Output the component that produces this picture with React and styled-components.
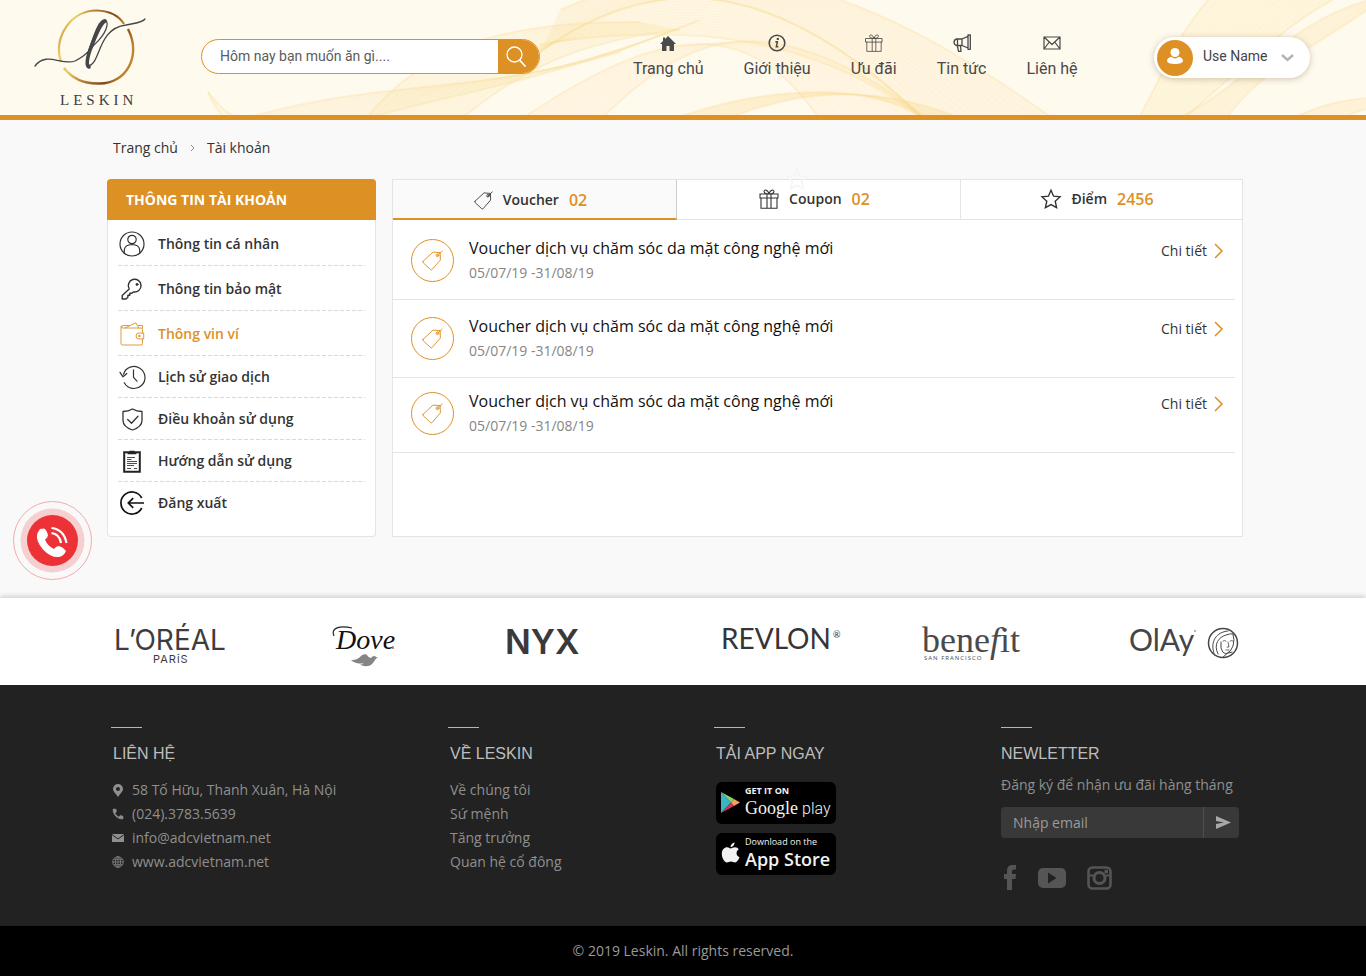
import React from "react";
import styled, { createGlobalStyle, css } from "styled-components";

const c = {
  orange: "#dd9024",
  cream: "#fffaee",
  page: "#f9f9f9",
  line: "#e4e4e4",
  ink: "#333333",
  foot: "#222222",
  footText: "#8f8f8f",
};
const openSans = '"Open Sans", "Noto Sans", sans-serif';
const roboto = 'Roboto, "Noto Sans", sans-serif';
const arial = '"Liberation Sans", Arial, sans-serif';

const Global = createGlobalStyle`
  *, *::before, *::after { box-sizing: border-box; }
  body { margin: 0; background: ${c.page}; font-family: ${openSans}; font-size: 14px; line-height: 20px; color: ${c.ink}; }
  a { color: inherit; text-decoration: none; }
  ul { margin: 0; padding: 0; list-style: none; }
  h2, h3, p { margin: 0; }
  button { font: inherit; cursor: pointer; }
  svg { display: block; flex: none; overflow: visible; }
`;

/* ---------- header ---------- */

const Header = styled.header`
  position: relative;
  display: flex;
  align-items: flex-start;
  height: 120px;
  padding: 0 56px 0 34px;
  background: ${c.cream};
  border-bottom: 5px solid ${c.orange};
`;
const Waves = styled.svg`
  position: absolute;
  inset: 0;
  width: 100%;
  height: 100%;
  overflow: hidden;
`;
const Logo = styled.a`
  position: relative;
  width: 113px;
  margin-top: 8px;
`;
const Search = styled.form`
  position: relative;
  display: flex;
  flex: 0 1 339px;
  height: 35px;
  margin: 39px 0 0 54px;
  border: 1px solid ${c.orange};
  border-radius: 18px;
  background: #fff;
  overflow: hidden;
`;
const SearchInput = styled.input`
  flex: 1;
  min-width: 0;
  padding: 0 18px 2px;
  border: 0;
  outline: 0;
  background: transparent;
  font: 14px/20px ${roboto};
  color: #555;
  &::placeholder { color: #5c5c5c; opacity: 1; }
`;
const SearchButton = styled.button`
  display: flex;
  align-items: center;
  width: 41px;
  padding: 0 0 0 8px;
  border: 0;
  background: ${c.orange};
`;
const Nav = styled.nav`
  position: relative;
  display: flex;
  gap: 40px;
  margin: 33px 0 0 93px;
`;
const NavItem = styled.a`
  display: flex;
  flex-direction: column;
  align-items: center;
  gap: 6px;
  font: 16px/20px ${roboto};
  color: #484848;
  white-space: nowrap;
`;
const NavIcon = styled.span`
  display: flex;
  align-items: center;
  height: 20px;
`;
const UserMenu = styled.button`
  position: relative;
  display: flex;
  align-items: center;
  gap: 10px;
  width: 156px;
  height: 41px;
  margin: 37px 0 0 auto;
  padding: 0 16px 0 3px;
  border: 0;
  border-radius: 21px;
  background: #fff;
  box-shadow: 0 1px 6px rgba(90, 70, 30, 0.3);
  font: 14px/20px ${roboto};
  color: #444;
  white-space: nowrap;
`;
const Avatar = styled.span`
  display: grid;
  place-items: center;
  width: 36px;
  height: 36px;
  padding-bottom: 3px;
  border-radius: 50%;
  background: ${c.orange};
`;
const UserName = styled.span`
  flex: 1;
  padding-bottom: 3px;
  text-align: left;
`;

/* ---------- page body ---------- */

const Crumbs = styled.nav`
  display: flex;
  align-items: center;
  gap: 12px;
  padding: 18px 123px 0 113px;
`;
const Columns = styled.main`
  display: flex;
  gap: 16px;
  padding: 21px 123px 61px 107px;
`;
const Side = styled.aside`
  flex: 0 0 269px;
  padding-bottom: 12px;
  border: 1px solid ${c.line};
  border-top: 0;
  border-radius: 4px;
  background: #fff;
`;
const SideTitle = styled.h2`
  margin: 0 -1px;
  padding: 0 19px;
  border-radius: 4px 4px 0 0;
  background: ${c.orange};
  color: #fff;
  font-size: 14px;
  font-weight: 700;
  line-height: 41px;
`;
const SideList = styled.ul`
  padding: 1px 10px 0;
`;
const SideItem = styled.li`
  height: ${(p) => (p.$tall ? 45 : 42)}px;
  background: repeating-linear-gradient(90deg, #d9d9d9 0 4px, transparent 4px 6px) bottom / 100% 1px no-repeat;
  &:last-child { background: none; }
`;
const SideLink = styled.a`
  display: flex;
  align-items: center;
  gap: 12px;
  height: 100%;
  font-weight: 600;
  color: ${(p) => (p.$active ? c.orange : c.ink)};
`;
const SideIcon = styled.span`
  display: flex;
  justify-content: center;
  width: 28px;
`;
const Panel = styled.section`
  flex: 1;
  min-width: 0;
  border: 1px solid ${c.line};
  background: #fff;
`;
const Tabs = styled.div`
  position: relative;
  display: grid;
  grid-template-columns: 284fr 284fr 281fr;
`;
const Tab = styled.button`
  display: flex;
  align-items: center;
  justify-content: center;
  gap: 10px;
  height: 40px;
  padding: 0 8px 2px 0;
  border: 0;
  border-right: 1px solid ${c.line};
  border-bottom: 1px solid ${c.line};
  background: #fff;
  font-weight: 600;
  color: ${c.ink};
  &:last-of-type { border-right: 0; }
  ${(p) =>
    p.$active &&
    css`
      padding-top: 2px;
      padding-bottom: 0;
      border-right-color: #cccccc;
      border-bottom: 2px solid ${c.orange};
      background: #fafafa;
    `}
`;
const Count = styled.span`
  font-size: 16px;
  color: ${c.orange};
`;
const FaintStar = styled.span`
  position: absolute;
  left: 393px;
  top: -12px;
  color: #f5f5f5;
`;
const VoucherList = styled.ul`
  padding: 2px 7px 0 0;
`;
const Voucher = styled.li`
  display: flex;
  align-items: center;
  padding: ${(p) => (p.$compact ? 12 : 15)}px 12px 15px 18px;
  border-bottom: 1px solid ${c.line};
`;
const Badge = styled.span`
  display: grid;
  place-items: center;
  width: 43px;
  height: 43px;
  border: 1px solid ${c.orange};
  border-radius: 50%;
  color: ${c.orange};
`;
const Info = styled.div`
  flex: 1;
  padding-left: 15px;
`;
const VoucherTitle = styled.h3`
  margin-bottom: 3px;
  font-size: 16px;
  font-weight: 400;
  line-height: 22px;
  color: #111;
`;
const VoucherDate = styled.p`
  line-height: 22px;
  color: #858585;
`;
const Detail = styled.a`
  display: flex;
  align-items: center;
  gap: 7px;
  align-self: flex-start;
  line-height: 28px;
`;
const CallButton = styled.a`
  position: fixed;
  left: 13px;
  top: 501px;
`;

/* ---------- brands and footer ---------- */

const Brands = styled.section`
  position: relative;
  display: grid;
  grid-template-columns: 216fr 175fr 216fr 199fr 208fr 112fr;
  padding: 22px 124px 17px 116px;
  background: #fff;
  box-shadow: 0 -2px 5px rgba(0, 0, 0, 0.16);
`;
const Footer = styled.footer`
  position: relative;
  background: ${c.foot};
  color: ${c.footText};
`;
const FooterGrid = styled.div`
  display: grid;
  grid-template-columns: 337fr 266fr 287fr 238fr;
  padding: 42px 127px 35px 111px;
  min-height: 241px;
`;
const FooterCol = styled.section`
  &::before {
    content: "";
    display: block;
    width: 31px;
    height: 1px;
    background: #f7b02c;
  }
`;
const FooterTitle = styled.h3`
  margin: 16px 0 14px;
  padding-left: ${(p) => (p.$flush ? 0 : 2)}px;
  font: 400 16px/20px ${arial};
  color: #bdbdbd;
`;
const FooterList = styled.ul`
  padding-left: ${(p) => (p.$flush ? 0 : 2)}px;
  line-height: 24px;
`;
const ContactItem = styled.li`
  display: flex;
  align-items: center;
  gap: 7px;
`;
const ContactIcon = styled.span`
  display: flex;
  justify-content: center;
  width: 14px;
`;
const Stores = styled.div`
  display: flex;
  flex-direction: column;
  gap: 9px;
  padding: 4px 0 0 2px;
`;
const Store = styled.a`
  display: flex;
  align-items: center;
  gap: 5px;
  width: 120px;
  height: 42px;
  padding: 0 0 2px 5px;
  border-radius: 6px;
  background: #000;
  color: #f2f2f2;
  white-space: nowrap;
`;
const StoreText = styled.span`
  display: flex;
  flex-direction: column;
`;
const StoreSmall = styled.span`
  font-size: 9px;
  font-weight: ${(p) => (p.$bold ? 700 : 400)};
  line-height: 12px;
`;
const StoreBig = styled.span`
  font-size: 18px;
  font-weight: 600;
  line-height: 22px;
`;
const GoogleWord = styled.span`
  font: 400 18px/22px "Liberation Serif", serif;
`;
const PlayWord = styled.span`
  margin-left: 4px;
  font: 300 16px/22px Roboto, sans-serif;
`;
const NewsText = styled.p`
  margin-top: -5px;
  line-height: 24px;
`;
const NewsForm = styled.form`
  display: flex;
  height: 31px;
  margin-top: 10px;
  border-radius: 4px;
  background: #393939;
`;
const NewsInput = styled.input`
  flex: 1;
  min-width: 0;
  padding: 0 12px;
  border: 0;
  outline: 0;
  background: transparent;
  font: 14px/20px ${openSans};
  color: #aaa;
  &::placeholder { color: #9b9b9b; opacity: 1; }
`;
const SendButton = styled.button`
  display: grid;
  place-items: center;
  width: 36px;
  padding: 0 0 0 3px;
  border: 0;
  border-left: 1px solid #4f4f4f;
  background: transparent;
`;
const Social = styled.div`
  display: flex;
  align-items: center;
  gap: 21px;
  margin-top: 27px;
  padding-left: 3px;
`;
const Copyright = styled.p`
  background: #000;
  color: #9a9a9a;
  text-align: center;
  line-height: 50px;
`;

/* ---------- drawings ---------- */

const lerp = (a, b, t) => a.map((v, i) => v + (b[i] - v) * t);
const curve = ([x1, y1, x2, y2, x3, y3, x4, y4]) => `M${x1} ${y1}C${x2} ${y2} ${x3} ${y3} ${x4} ${y4}`;
/* each ribbon fans out from edge curve a to edge curve b */
const ribbons = [
  { a: [540, 52, 640, -20, 760, -40, 925, 120], b: [560, 10, 720, -60, 860, -20, 1055, 120], n: 16, tint: 0.15 },
  { a: [540, 44, 700, 20, 820, 40, 925, 120], b: [540, 52, 640, -20, 760, -40, 925, 120], n: 14, tint: 0.1 },
  { a: [600, 120, 700, 20, 780, 10, 930, 120], b: [520, 120, 640, 40, 740, 0, 820, 120], n: 10, tint: 0.12 },
  { a: [725, 120, 800, 88, 880, 84, 965, 120], b: [670, 120, 780, 80, 880, 86, 925, 120], n: 8, tint: 0.26 },
  { a: [240, 120, 380, 78, 470, 96, 620, 52], b: [365, 120, 430, 96, 520, 92, 700, 20], n: 12, tint: 0.13 },
  { a: [365, 120, 420, 50, 500, 20, 640, 22], b: [460, 120, 520, 70, 580, 40, 680, 30], n: 12, tint: 0.14 },
  { a: [208, 92, 220, 108, 230, 116, 245, 120], b: [208, 92, 214, 106, 222, 116, 228, 120], n: 2, tint: 0.1 },
  { a: [1138, 120, 1170, 60, 1180, 30, 1212, -4], b: [1182, 120, 1240, 70, 1290, 20, 1340, -4], n: 14, tint: 0.17 },
  { a: [1175, 120, 1240, 90, 1290, 20, 1370, 0], b: [1225, 120, 1260, 70, 1310, 50, 1370, 8], n: 10, tint: 0.18 },
  { a: [1290, 120, 1320, 104, 1345, 100, 1370, 98], b: [1340, 120, 1350, 114, 1360, 110, 1370, 108], n: 4, tint: 0.2 },
];

const WaveArt = () => (
  <Waves viewBox="0 0 1366 115" preserveAspectRatio="none" aria-hidden="true">
    {ribbons.map((r, i) => {
      const [x1, y1, x2, y2, x3, y3, x4, y4] = r.b;
      return (
        <g key={i} fill="none" stroke="#f9dc98">
          <path d={`${curve(r.a)}L${x4} ${y4}C${x3} ${y3} ${x2} ${y2} ${x1} ${y1}Z`} fill="#fbd98a" fillOpacity={r.tint} stroke="none" />
          {Array.from({ length: r.n + 1 }, (_, k) => (
            <path key={k} d={curve(lerp(r.a, r.b, k / r.n))} strokeWidth={k === 0 || k === r.n ? 2 : 1} strokeOpacity={k === 0 || k === r.n ? 0.32 : 0.12} />
          ))}
        </g>
      );
    })}
  </Waves>
);

const LogoArt = () => (
  <svg width="113" height="100" viewBox="0 0 113 100" fill="none" role="img" aria-label="Leskin">
    <defs>
      <linearGradient id="gold" x1="0" y1="0" x2="1" y2="0.3">
        <stop offset="0" stopColor="#a9742a" />
        <stop offset="0.25" stopColor="#f0cf62" />
        <stop offset="0.5" stopColor="#b98036" />
        <stop offset="0.8" stopColor="#7a4a20" />
        <stop offset="1" stopColor="#c08430" />
      </linearGradient>
    </defs>
    <path d="M27 54C19 28 38 2 63 2.500C76 3 85 8 90 16" stroke="url(#gold)" strokeWidth="2.2" />
    <path d="M94 21C108 48 92 76 65 75.500C48 76 37 69 30 60" stroke="url(#gold)" strokeWidth="2.4" />
    <path d="M1 58C12 43 28 58 41 53C55 46 56 41 60 37C72 26 76 15 71 12C65 11 60 27 55 42C51 55 54 60 58 56C66 50 66 20 92 17C101 15 108 15 111 11" stroke="#45464a" strokeWidth="1.3" strokeLinecap="round" />
    <path d="M71 13C66 15 61 29 56 42C53 51 52 58 55 59" stroke="#45464a" strokeWidth="3.6" strokeLinecap="round" />
    <text x="26" y="97" fontFamily='"Liberation Serif", serif' fontSize="15" letterSpacing="4" fill="#3c3c3e">LESKIN</text>
  </svg>
);

const s = { fill: "none", stroke: "currentColor", strokeLinejoin: "round", strokeLinecap: "round" };

const GiftIcon = ({ size, sw = 1.2 }) => (
  <svg width={size} height={size} viewBox="0 0 20 20" {...s} strokeWidth={sw}>
    <path d="M1 5H19V9H1ZM2 9V19.3H18V9M8 5V19M12 5V19M10 4.500C8 5 5 4.500 5 2.600C5 .3 8.500 .3 10 4.500C11.500 .3 15 .3 15 2.600C15 4.500 12 5 10 4.500Z" strokeLinejoin="miter" />
  </svg>
);
const TagIcon = ({ size }) => (
  <svg width={size} height={size} viewBox="0 0 20 20" {...s} strokeWidth="0.9">
    <path d="M1 10.800L10.500 2L17.300 2.500L17.500 9.500L9.500 18.700Q8.800 19.200 8.200 18.700L1.200 12.200Q.5 11.500 1 10.800Z" />
    <circle cx="14.700" cy="5" r="1.300" />
    <path d="M14.500 5.200L19.300 1" />
  </svg>
);
const StarIcon = ({ size, sw = 1.4 }) => (
  <svg width={size} height={size} viewBox="0 0 20 20" {...s} strokeWidth={sw}>
    <path d="M10 1.300L12.600 7.200L19 7.900L14.200 12.200L15.600 18.600L10 15.600L4.400 18.600L5.800 12.200L1 7.900L7.400 7.200Z" strokeLinejoin="miter" />
  </svg>
);
const Chevron = ({ w, h, sw, color }) => (
  <svg width={w} height={h} viewBox={`0 0 ${w} ${h}`} fill="none" stroke={color} strokeWidth={sw}>
    <path d={`M1 1L${w - 1} ${h / 2}L1 ${h - 1}`} />
  </svg>
);

const navItems = [
  ["Trang chủ", <svg width="16" height="15" viewBox="0 0 16 15" fill="#4a4a4a"><path d="M8 0L16 8H14V15H9.500V10H6.500V15H2V8H0L3 5V1.500H5V3Z" /></svg>],
  ["Giới thiệu", <svg width="18" height="18" viewBox="0 0 18 18" fill="none" stroke="#4a4a4a"><circle cx="9" cy="9" r="7.800" strokeWidth="1.600" /><circle cx="9.800" cy="4.900" r="1.200" fill="#4a4a4a" stroke="none" /><path d="M7.300 7.700H9.400L8.300 12.800H10.400" strokeWidth="1.500" /></svg>],
  ["Ưu đãi", <GiftIcon size={18} sw={0.9} />],
  ["Tin tức", <svg width="18" height="18" viewBox="0 0 18 18" {...s} strokeWidth="1.300"><path d="M15 1H17.300V15.300H15ZM15 2.300L9 5V11.500L15 14M9 5H3.500Q1.200 5.500 1 8.300Q1.200 11 3.500 11.500H9M4.500 5V11.500M4.300 11.500L5.500 17.300H8L7.400 11.500" /></svg>],
  ["Liên hệ", <svg width="18" height="14" viewBox="0 0 18 14" {...s} strokeWidth="1.200"><path d="M1 1H17V13H1ZM1 1L9 8.500L17 1M1 13L6.300 6M17 13L11.700 6" /></svg>],
];

const sideItems = [
  ["Thông tin cá nhân", true, <svg width="26" height="26" viewBox="0 0 26 26" {...s} strokeWidth="1.200"><circle cx="13" cy="13" r="12" /><circle cx="13" cy="8.500" r="4.200" /><path d="M5.300 22V19Q5.800 13.700 13 13.500Q20.200 13.700 20.700 19V22" /></svg>],
  ["Thông tin bảo mật", true, <svg width="22" height="22" viewBox="0 0 22 22" {...s} strokeWidth="1.400"><path d="M8.200 11A6.400 6.400 0 1 1 12.300 13.900L10.800 15.300H8.800V17.300H6.900V19.300L5 21H1.200V17.500Z" /><circle cx="16" cy="6.400" r="1" fill="currentColor" strokeWidth="1" /></svg>],
  ["Thông vin ví", true, <svg width="24" height="24" viewBox="0 0 24 24" {...s} strokeWidth="0.9"><path d="M3 3.500Q1 3.500 1 5.500V21.500Q1 23 2.500 23H21Q22.500 23 22.500 21.500V17M22.500 11V7.500Q22.500 6 21 6H3Q1 6 1 4.500M22.500 6V3.500H18.500M3 3.500H9M5 6L15.800 .8L18.800 6M23.300 11H19A3 3 0 0 0 19 17H23.300Z" /><circle cx="19.300" cy="14" r=".8" /></svg>],
  ["Lịch sử giao dịch", false, <svg width="27" height="24" viewBox="0 0 27 24" {...s} strokeWidth="1.200"><path d="M4.500 9.200A11 11 0 1 1 5.300 17.700M1 7.300L4 11.800L7.800 8.500M14.500 4.800V12.300L18 16.200" /></svg>],
  ["Điều khoản sử dụng", false, <svg width="21" height="23" viewBox="0 0 21 23" {...s} strokeWidth="1.300"><path d="M10.500 1C13 2.500 17 3.500 20 3.500V12.500C20 17.500 15 20.500 10.500 22C6 20.500 1 17.500 1 12.500V3.500C4 3.500 8 2.500 10.500 1ZM5.700 11.500L9.500 15.200L16 8.300" /></svg>],
  ["Hướng dẫn sử dụng", false, <svg width="18" height="23" viewBox="0 0 18 23" fill="none" stroke="#222"><path d="M1.200 2.200H16.800V21.800H1.200Z" strokeWidth="2" /><path d="M4.500 3.500H13.500M6.500 1.500H11.500" strokeWidth="1.600" /><path d="M4 7.500H12M4 9.500H8.500M4 11.500H14M4 13.500H14M4 15.500H11M4 18.500H8M11 18.500H14" strokeWidth=".8" /></svg>],
  ["Đăng xuất", false, <svg width="26" height="24" viewBox="0 0 26 24" fill="none" stroke="#111" strokeWidth="1.700"><path d="M22.700 7A11 11 0 1 0 22.700 17M25 12H9.500M14.200 7.200L9.300 12L14.200 16.800" /></svg>],
];

const LorealLogo = () => (
  <svg width="116" height="44" viewBox="0 0 116 44" fill="#3d3d3f">
    <text x="-2" y="30" fontFamily="Inter, sans-serif" fontSize="28">L’ORÉAL</text>
    <text x="37" y="43" fontFamily="Inter, sans-serif" fontSize="11" letterSpacing="1">PARiS</text>
  </svg>
);
const DoveLogo = () => (
  <svg width="70" height="48" viewBox="0 0 70 48">
    <text x="4" y="29" fontFamily='"Liberation Serif", serif' fontStyle="italic" fontSize="28" fill="#111">Dove</text>
    <path d="M2 16C-2 8 8 5 20 8" fill="none" stroke="#222" strokeWidth="1.200" />
    <circle cx="61" cy="28" r="1" fill="#777" />
    <path d="M19 40C24 40.500 27 38 29 36C31 34 34 33.500 35 35C36 37 38 38 39 38C40 36 43 35 44 37L46 37.500C43 38.500 43 41 40 44C37 47 31 46.500 28 44.500C30 44.500 31 44 32 43.500C27 44 22 43 19 40Z" fill="#858585" />
  </svg>
);
const NyxLogo = () => (
  <svg width="90" height="44" viewBox="0 0 90 44">
    <text x="-2" y="34" fontFamily="Inter, sans-serif" fontWeight="600" fontSize="34" fill="#3a3a3c">NYX</text>
  </svg>
);
const RevlonLogo = () => (
  <svg width="122" height="44" viewBox="0 0 122 44" fill="#353537">
    <text x="-2" y="29" fontFamily="Lato, sans-serif" fontSize="28">REVLON</text>
    <text x="110" y="18" fontFamily="Lato, sans-serif" fontSize="9">®</text>
  </svg>
);
const BenefitLogo = () => (
  <svg width="108" height="44" viewBox="0 0 108 44" fill="#4a4a4c">
    <text x="0" y="32" fontFamily='"Liberation Serif", serif' fontSize="36">bene<tspan fontStyle="italic">f</tspan>it</text>
    <text x="2" y="40" fontFamily='"Open Sans", sans-serif' fontSize="6" letterSpacing="1">SAN FRANCISCO</text>
  </svg>
);
const OlayLogo = () => (
  <svg width="112" height="44" viewBox="0 0 112 44" fill="#454547">
    <text x="-1" y="31" fontFamily="Lato, sans-serif" fontSize="30">OlAy</text>
    <circle cx="65" cy="11" r="1" fill="#999" />
    <g fill="none" stroke="#454547" strokeLinecap="round">
      <circle cx="93" cy="23" r="14.500" strokeWidth="1.500" />
      <path d="M84 33C80 22 86 12 98 11M88 34C83 24 89 17 96 15Q101 13 103 14M91 22V28Q92 33 96 34Q101 32 103 26Q105 20 103 14M93 37Q97 32 102 32" strokeWidth="1" />
      <path d="M93 21Q95 20 96 21M100 21Q101 20 103 21M98 22L99 27H97M96 30H99" strokeWidth=".8" />
    </g>
  </svg>
);

const phonePath = "M6.600 10.800C8 13.600 10.400 16 13.200 17.400L15.400 15.200C15.700 14.900 16.100 14.800 16.400 14.900C17.500 15.300 18.800 15.500 20 15.500C20.600 15.500 21 15.900 21 16.500V20C21 20.600 20.600 21 20 21C10.600 21 3 13.400 3 4C3 3.400 3.400 3 4 3H7.500C8.100 3 8.500 3.400 8.500 4C8.500 5.200 8.700 6.500 9.100 7.600C9.200 7.900 9.100 8.300 8.800 8.600Z";

const contacts = [
  ["58 Tố Hữu, Thanh Xuân, Hà Nội", "#map", <svg width="10" height="13" viewBox="0 0 10 13" fill={c.footText}><path fillRule="evenodd" d="M5 0A5 5 0 0 1 10 5C10 8 6.500 10 5 13C3.500 10 0 8 0 5A5 5 0 0 1 5 0ZM5 3A2 2 0 1 0 5 7A2 2 0 0 0 5 3Z" /></svg>],
  ["(024).3783.5639", "tel:02437835639", <svg width="10" height="10" viewBox="3 3 18 18" fill={c.footText} stroke={c.footText}><path d={phonePath} /></svg>],
  ["info@adcvietnam.net", "mailto:info@adcvietnam.net", <svg width="12" height="8" viewBox="0 0 12 8"><path d="M0 0H12V8H0Z" fill={c.footText} /><path d="M0 .6L6 5L12 .6" fill="none" stroke={c.foot} /></svg>],
  ["www.adcvietnam.net", "#web", <svg width="12" height="12" viewBox="0 0 12 12" fill="none" stroke="#7d7d7d" strokeWidth=".9"><circle cx="6" cy="6" r="5.300" /><ellipse cx="6" cy="6" rx="2.600" ry="5.300" /><path d="M6 .7V11.300M.7 6H11.300M1.500 3.300H10.500M1.500 8.700H10.500" /></svg>],
];
const links = ["Về chúng tôi", "Sứ mệnh", "Tăng trưởng", "Quan hệ cổ đông"];

const tabs = [
  ["Voucher", "02", <TagIcon size={19} />],
  ["Coupon", "02", <GiftIcon size={20} sw={1.1} />],
  ["Điểm", "2456", <StarIcon size={20} />],
];

export default function App() {
  return (
    <>
      <Global />
      <Header>
        <WaveArt />
        <Logo href="#home"><LogoArt /></Logo>
        <Search role="search" onSubmit={(e) => e.preventDefault()}>
          <SearchInput aria-label="Tìm kiếm" placeholder="Hôm nay bạn muốn ăn gì...." />
          <SearchButton aria-label="Tìm">
            <svg width="20" height="22" viewBox="0 0 20 22" fill="none" stroke="#fff" strokeLinecap="round">
              <circle cx="8.500" cy="8.500" r="7.500" strokeWidth="1.300" />
              <path d="M14 14.500L19 20" strokeWidth="1.800" />
            </svg>
          </SearchButton>
        </Search>
        <Nav>
          {navItems.map(([label, icon]) => (
            <NavItem href="#" key={label}><NavIcon>{icon}</NavIcon>{label}</NavItem>
          ))}
        </Nav>
        <UserMenu>
          <Avatar>
            <svg width="16" height="17" viewBox="0 0 16 17" fill="#fff">
              <ellipse cx="8" cy="4.500" rx="4.500" ry="4.500" />
              <path d="M4.200 8.800Q8 12 11.800 8.800Q16 10 16 13Q15.500 16 8 16Q.5 16 0 13Q0 10 4.200 8.800Z" />
            </svg>
          </Avatar>
          <UserName>Use Name</UserName>
          <svg width="13" height="8" viewBox="0 0 13 8" fill="none" stroke="#b3b3b3" strokeWidth="2.400"><path d="M1 1L6.500 6L12 1" /></svg>
        </UserMenu>
      </Header>

      <Crumbs aria-label="Breadcrumb">
        <a href="#home">Trang chủ</a>
        <Chevron w={5} h={8} sw={1} color="#888" />
        <a href="#account">Tài khoản</a>
      </Crumbs>

      <Columns>
        <Side>
          <SideTitle>THÔNG TIN TÀI KHOẢN</SideTitle>
          <SideList>
            {sideItems.map(([label, tall, icon], i) => (
              <SideItem key={label} $tall={tall}>
                <SideLink href="#" $active={i === 2}><SideIcon>{icon}</SideIcon>{label}</SideLink>
              </SideItem>
            ))}
          </SideList>
        </Side>
        <Panel>
          <Tabs role="tablist">
            {tabs.map(([label, count, icon], i) => (
              <Tab key={label} role="tab" aria-selected={i === 0} $active={i === 0}>
                {icon}<span>{label}</span><Count>{count}</Count>
              </Tab>
            ))}
            <FaintStar><StarIcon size={22} sw={1.6} /></FaintStar>
          </Tabs>
          <VoucherList>
            {[0, 1, 2].map((n) => (
              <Voucher key={n} $compact={n === 2}>
                <Badge><TagIcon size={21} /></Badge>
                <Info>
                  <VoucherTitle>Voucher dịch vụ chăm sóc da mặt công nghệ mới</VoucherTitle>
                  <VoucherDate>05/07/19 -31/08/19</VoucherDate>
                </Info>
                <Detail href="#detail">Chi tiết <Chevron w={9} h={16} sw={1.5} color={c.orange} /></Detail>
              </Voucher>
            ))}
          </VoucherList>
        </Panel>
      </Columns>

      <CallButton href="tel:02437835639" aria-label="Gọi">
        <svg width="79" height="79" viewBox="0 0 79 79">
          <circle cx="39.500" cy="39.500" r="39" fill="none" stroke="#f3a9ab" />
          <circle cx="39.500" cy="39.500" r="32" fill="#f6d0d1" />
          <circle cx="39.500" cy="39.500" r="25.500" fill="#ec3237" />
          <path d="M27 28L31 27.500Q34 29 35 34.500Q34.500 37 32 38.500Q34.500 45 41 48Q43 45 46 45Q50 46 53 50Q51 55 46 56Q38 57 30 48.500Q22 39 24.500 32Z" fill="#fff" />
          <path d="M38.500 32Q46.500 33 48 42M38.500 27Q51 28.500 53.500 42" fill="none" stroke="#fff" strokeWidth="2.200" />
        </svg>
      </CallButton>

      <Brands>
        <LorealLogo /><DoveLogo /><NyxLogo /><RevlonLogo /><BenefitLogo /><OlayLogo />
      </Brands>

      <Footer>
        <FooterGrid>
          <FooterCol>
            <FooterTitle>LIÊN HỆ</FooterTitle>
            <FooterList $flush>
              {contacts.map(([label, href, icon]) => (
                <ContactItem key={label}><ContactIcon>{icon}</ContactIcon><a href={href}>{label}</a></ContactItem>
              ))}
            </FooterList>
          </FooterCol>
          <FooterCol>
            <FooterTitle>VỀ LESKIN</FooterTitle>
            <FooterList>
              {links.map((l) => <li key={l}><a href="#">{l}</a></li>)}
            </FooterList>
          </FooterCol>
          <FooterCol>
            <FooterTitle>TẢI APP NGAY</FooterTitle>
            <Stores>
              <Store href="#google-play">
                <svg width="19" height="21" viewBox="0 0 19 21">
                  <path d="M0 0L10 10.500L0 21Z" fill="#38b6c4" />
                  <path d="M0 0L13 7L10 10.500Z" fill="#8fd06a" />
                  <path d="M0 21L13 14L10 10.500Z" fill="#d8325f" />
                  <path d="M13 7L19 10.500L13 14L10 10.500Z" fill="#f5a25a" />
                </svg>
                <StoreText>
                  <StoreSmall $bold>GET IT ON</StoreSmall>
                  <span><GoogleWord>Google</GoogleWord><PlayWord>play</PlayWord></span>
                </StoreText>
              </Store>
              <Store href="#app-store">
                <svg width="19" height="22" viewBox="0 0 19 22" fill="#f2f2f2">
                  <path d="M9.500 6.500C11 6.500 12 5.300 14 5.300C15.500 5.300 17 6 17.800 7.300C14.500 9.300 15 14 18.500 15.300C17.500 18 15.800 20.500 14 20.500C12.300 20.500 11.800 19.600 10 19.600C8.200 19.600 7.500 20.500 6 20.500C3.500 20.500 .8 16 .8 11.800C.8 7.500 3.500 5.300 6 5.300C7.600 5.300 8.800 6.500 9.500 6.500ZM9.500 5C9.500 2.500 11.500 .6 13.500 .4C13.700 2.800 11.600 4.900 9.500 5Z" />
                </svg>
                <StoreText>
                  <StoreSmall>Download on the</StoreSmall>
                  <StoreBig>App Store</StoreBig>
                </StoreText>
              </Store>
            </Stores>
          </FooterCol>
          <FooterCol>
            <FooterTitle $flush>NEWLETTER</FooterTitle>
            <NewsText>Đăng ký để nhận ưu đãi hàng tháng</NewsText>
            <NewsForm onSubmit={(e) => e.preventDefault()}>
              <NewsInput type="email" aria-label="Email" placeholder="Nhập email" />
              <SendButton aria-label="Gửi">
                <svg width="15" height="13" viewBox="0 0 15 13" fill="#a8a8a8"><path d="M0 0L15 6.500L0 13V8L8 6.500L0 5Z" /></svg>
              </SendButton>
            </NewsForm>
            <Social>
              <a href="#facebook" aria-label="Facebook">
                <svg width="13" height="25" viewBox="0 0 13 25" fill="#555"><path d="M3 25V14H0V9H3V6C3 2 5 0 9 0H12V4.500H10Q8 4.500 8 6.500V9H12L11.500 14H8V25Z" /></svg>
              </a>
              <a href="#youtube" aria-label="YouTube">
                <svg width="28" height="20" viewBox="0 0 28 20"><rect width="28" height="20" rx="5" fill="#555" /><path d="M10 4.500L18.500 10L10 15.500Z" fill={c.foot} /></svg>
              </a>
              <a href="#instagram" aria-label="Instagram">
                <svg width="25" height="24" viewBox="0 0 25 24" fill="none" stroke="#555"><rect x="1.500" y="1.500" width="22" height="21" rx="4" strokeWidth="2.600" /><path d="M2 9.500H6.500M18.500 9.500H23" strokeWidth="2" /><circle cx="12.500" cy="12" r="5.500" strokeWidth="3" /><path d="M17.500 5.500H21" strokeWidth="3.500" /></svg>
              </a>
            </Social>
          </FooterCol>
        </FooterGrid>
        <Copyright>© 2019 Leskin. All rights reserved.</Copyright>
      </Footer>
    </>
  );
}
